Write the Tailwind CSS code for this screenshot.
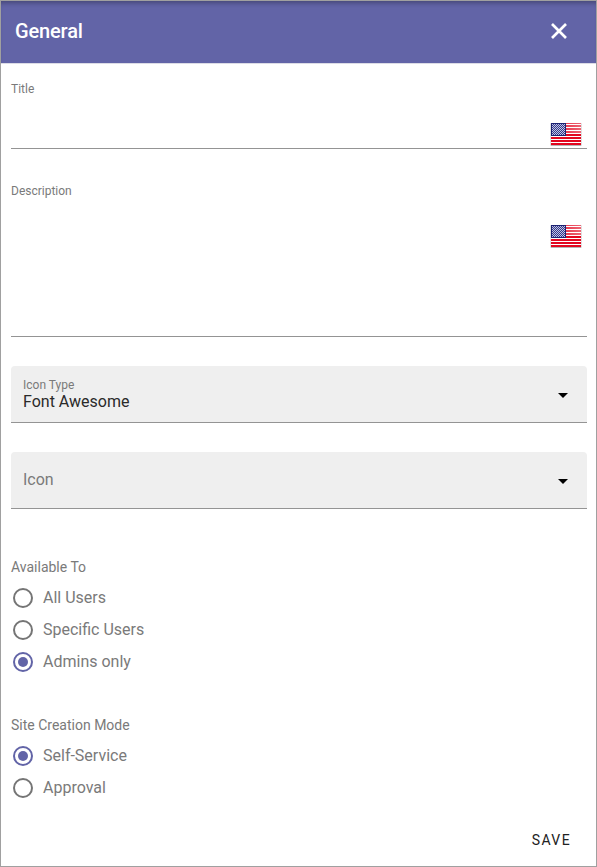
<!DOCTYPE html>
<html lang="en">
<head>
<meta charset="utf-8">
<title>General</title>
<script src="https://cdn.jsdelivr.net/npm/@tailwindcss/browser@4"></script>
</head>
<body class="bg-white font-[Roboto,sans-serif] text-[#7a7a7a]">
<svg class="absolute size-0">
  <defs>
    <pattern id="stars" width="2" height="2" patternUnits="userSpaceOnUse">
      <rect width="2" height="2" fill="#343a8c"/><rect width="1" height="1" fill="#c0c3e2"/><rect x="1" y="1" width="1" height="1" fill="#c0c3e2"/>
    </pattern>
    <linearGradient id="gloss" x1="0" y1="0" x2="1" y2="0"><stop offset="0" stop-color="#fff" stop-opacity=".05"/><stop offset="1" stop-color="#fff" stop-opacity=".38"/></linearGradient>
    <symbol id="flag" viewBox="0 0 32 26">
      <rect x="0" y="1" width="32" height="23" rx="1" fill="#000" opacity=".12"/>
      <rect x="1" y="1" width="30" height="22" fill="#fff"/>
      <path stroke="#e2061f" stroke-width="2" d="M1 4h30M1 7h30M1 10h30M1 13h30M1 16h30M1 19h30M1 22h30"/>
      <path stroke="#e2061f" d="M1 1.5h30"/>
      <rect x="1" y="1" width="30" height="11" fill="url(#gloss)"/>
      <rect x="1" y="1" width="15" height="13" fill="#1c2272"/>
      <rect x="2" y="2" width="13" height="11" fill="url(#stars)"/>
      <rect x="1" y="23" width="30" height="1" fill="#999" opacity=".6"/>
    </symbol>
  </defs>
</svg>
<main class="flex h-[867px] w-[597px] flex-col border border-[#a0a0a0]">
  <header class="flex h-[63px] shrink-0 items-center justify-between border-b border-[#dcdce6] bg-[#6264a7] pr-[29px] pb-[2px] pl-[14px] shadow-[inset_0_5px_5px_-3px_rgba(0,0,0,0.3)]">
    <h1 class="text-[20px] leading-6 font-medium tracking-[-0.15px] text-white">General</h1>
    <svg class="size-4" viewBox="0 0 16 16" fill="none" stroke="#fff" stroke-width="2.7"><path d="M1 1l14 14M15 1L1 15"/></svg>
  </header>
  <form class="flex grow flex-col pr-[9px] pl-[10px]">
    <div class="flex h-[85px] flex-col justify-between border-b border-[#949494] pt-[17px]">
      <label class="text-xs">Title</label>
      <svg class="mr-[5px] h-[26px] w-8 self-end"><use href="#flag"/></svg>
    </div>
    <div class="mt-[34px] flex h-[154px] flex-col border-b border-[#949494]">
      <label class="text-xs">Description</label>
      <svg class="mt-[25px] mr-[5px] h-[26px] w-8 self-end"><use href="#flag"/></svg>
    </div>
    <div class="mt-[29px] flex h-[57px] items-center justify-between rounded-t border-b border-[#949494] bg-[#efefef] pr-[19px] pl-3">
      <div class="flex flex-col">
        <span class="text-xs leading-[15px]">Icon Type</span>
        <span class="text-base leading-[18px] text-[#2a2a2a]">Font Awesome</span>
      </div>
      <svg class="mt-[2px] h-[5px] w-[10px]" viewBox="0 0 10 5"><path d="M0 0h10L5 5z"/></svg>
    </div>
    <div class="mt-[29px] flex h-[57px] items-center justify-between rounded-t border-b border-[#949494] bg-[#efefef] pr-[19px] pl-3">
      <span class="text-base leading-6">Icon</span>
      <svg class="mt-[2px] h-[5px] w-[10px]" viewBox="0 0 10 5"><path d="M0 0h10L5 5z"/></svg>
    </div>
    <fieldset class="mt-[48px] flex flex-col">
      <legend class="contents"><span class="text-sm">Available To</span></legend>
      <label class="mt-[5px] flex h-8 items-center gap-[10px] pl-[2px]"><span class="size-5 rounded-full border-2 border-[#757575]"></span>All Users</label>
      <label class="flex h-8 items-center gap-[10px] pl-[2px]"><span class="size-5 rounded-full border-2 border-[#757575]"></span>Specific Users</label>
      <label class="flex h-8 items-center gap-[10px] pl-[2px]"><span class="flex size-5 items-center justify-center rounded-full border-2 border-[#6264a7]"><span class="size-[10px] rounded-full bg-[#6264a7]"></span></span>Admins only</label>
    </fieldset>
    <fieldset class="mt-[37px] flex flex-col">
      <legend class="contents"><span class="text-sm">Site Creation Mode</span></legend>
      <label class="mt-[5px] flex h-8 items-center gap-[10px] pl-[2px]"><span class="flex size-5 items-center justify-center rounded-full border-2 border-[#6264a7]"><span class="size-[10px] rounded-full bg-[#6264a7]"></span></span>Self-Service</label>
      <label class="flex h-8 items-center gap-[10px] pl-[2px]"><span class="size-5 rounded-full border-2 border-[#757575]"></span>Approval</label>
    </fieldset>
    <button type="button" class="mt-auto mr-4 mb-4 self-end text-sm tracking-[1.4px] text-[#212121]">SAVE</button>
  </form>
</main>
</body>
</html>
